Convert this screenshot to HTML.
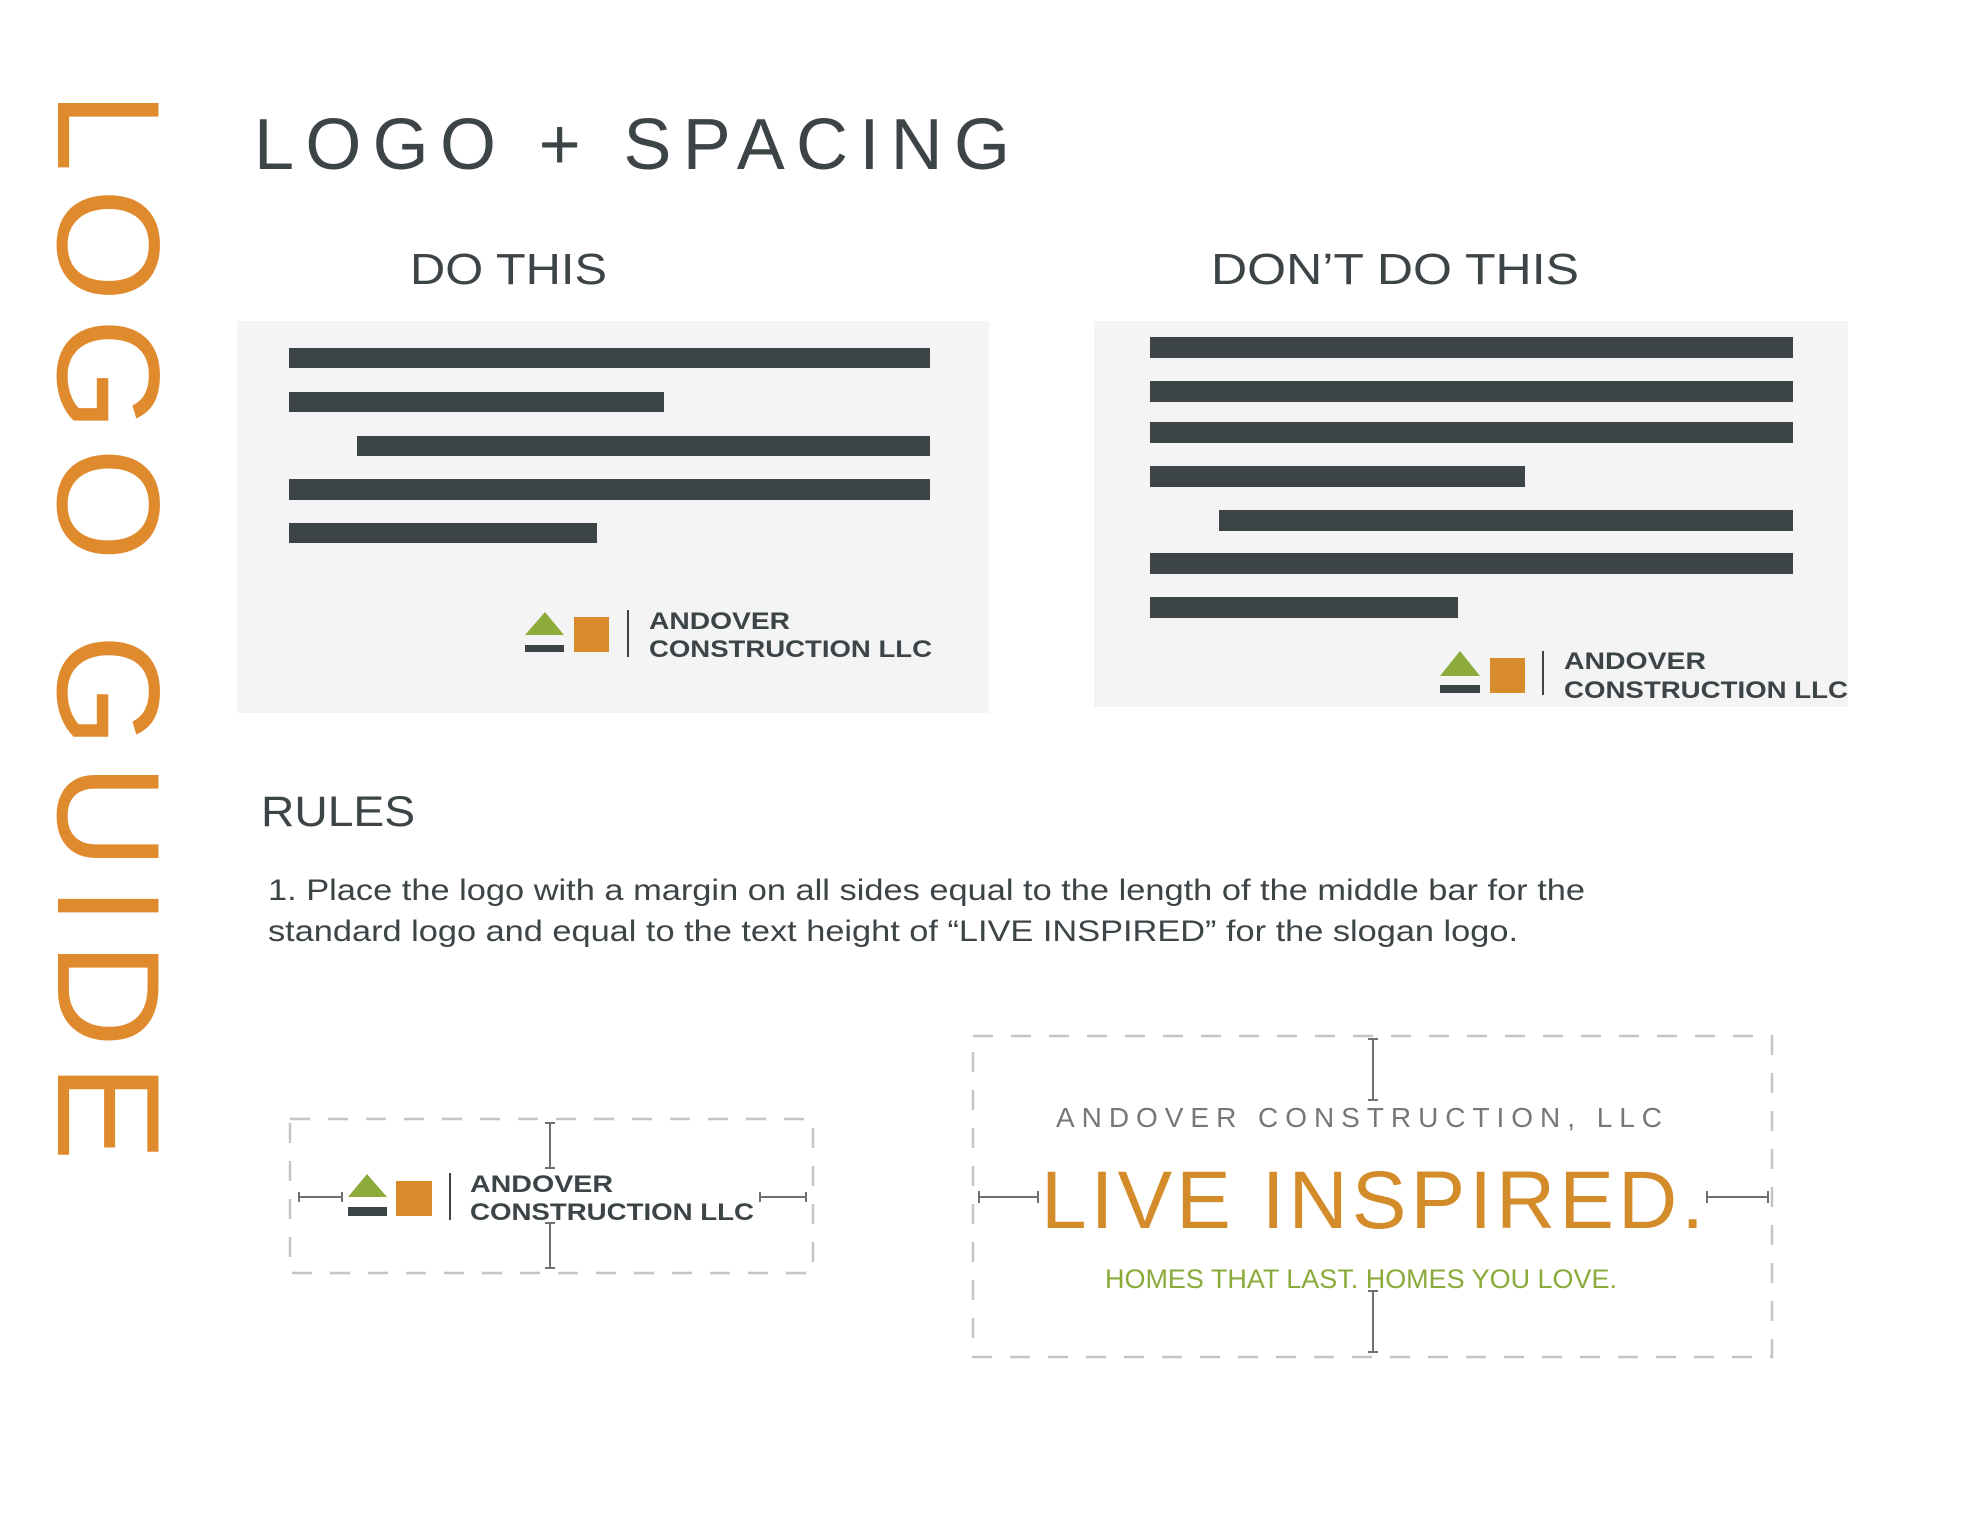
<!DOCTYPE html>
<html><head><meta charset="utf-8"><style>
html,body{margin:0;padding:0;background:#fff;}
svg{display:block}
text{font-family:"Liberation Sans",sans-serif;}
</style></head><body>
<svg width="1980" height="1530" viewBox="0 0 1980 1530" xmlns="http://www.w3.org/2000/svg">
<rect width="1980" height="1530" fill="#fff"/>
<!-- vertical LOGO GUIDE -->
<text transform="translate(58,91) rotate(90)" font-size="146" fill="#e08a2e" textLength="1070" lengthAdjust="spacing">LOGO GUIDE</text>
<!-- title -->
<text x="254" y="169" font-size="72" fill="#3d4447" textLength="756" lengthAdjust="spacing">LOGO + SPACING</text>
<text x="410" y="284" font-size="44" fill="#3d4447" textLength="197" lengthAdjust="spacingAndGlyphs">DO THIS</text>
<text x="1211" y="284" font-size="44" fill="#3d4447" textLength="368" lengthAdjust="spacingAndGlyphs">DON’T DO THIS</text>

<!-- DO box -->
<rect x="237" y="321" width="752" height="392" fill="#f4f4f4"/>
<g fill="#3d4447">
<rect x="289" y="348" width="641" height="20"/>
<rect x="289" y="392" width="375" height="20"/>
<rect x="357" y="436" width="573" height="20"/>
<rect x="289" y="479" width="641" height="21"/>
<rect x="289" y="523" width="308" height="20"/>
</g>
<polygon points="525,635 545,612 564,635" fill="#8cab3b"/>
<rect x="525" y="645" width="39" height="7" fill="#3d4447"/>
<rect x="574" y="617" width="35" height="35" fill="#d98a2b"/>
<rect x="627" y="610" width="2" height="47" fill="#3d4447"/>
<text x="649" y="629" font-size="24" font-weight="bold" fill="#3d4447" textLength="141" lengthAdjust="spacingAndGlyphs">ANDOVER</text>
<text x="649" y="657" font-size="24" font-weight="bold" fill="#3d4447" textLength="283" lengthAdjust="spacingAndGlyphs">CONSTRUCTION LLC</text>

<!-- DON'T box -->
<rect x="1094" y="321" width="754" height="386" fill="#f4f4f4"/>
<g fill="#3d4447">
<rect x="1150" y="337" width="643" height="21"/>
<rect x="1150" y="381" width="643" height="21"/>
<rect x="1150" y="422" width="643" height="21"/>
<rect x="1150" y="466" width="375" height="21"/>
<rect x="1219" y="510" width="574" height="21"/>
<rect x="1150" y="553" width="643" height="21"/>
<rect x="1150" y="597" width="308" height="21"/>
</g>
<polygon points="1440,676 1460,651 1480,676" fill="#8cab3b"/>
<rect x="1440" y="685" width="40" height="8" fill="#3d4447"/>
<rect x="1490" y="658" width="35" height="35" fill="#d98a2b"/>
<rect x="1542" y="651" width="2" height="44" fill="#3d4447"/>
<text x="1564" y="669" font-size="24" font-weight="bold" fill="#3d4447" textLength="142" lengthAdjust="spacingAndGlyphs">ANDOVER</text>
<text x="1564" y="698" font-size="24" font-weight="bold" fill="#3d4447" textLength="284" lengthAdjust="spacingAndGlyphs">CONSTRUCTION LLC</text>

<!-- RULES -->
<text x="261" y="826" font-size="43" fill="#3d4447" textLength="154" lengthAdjust="spacingAndGlyphs">RULES</text>
<text x="268" y="900" font-size="30" fill="#3d4447" textLength="1317" lengthAdjust="spacingAndGlyphs">1. Place the logo with a margin on all sides equal to the length of the middle bar for the</text>
<text x="268" y="941" font-size="30" fill="#3d4447" textLength="1250" lengthAdjust="spacingAndGlyphs">standard logo and equal to the text height of “LIVE INSPIRED” for the slogan logo.</text>

<!-- left dashed box -->
<rect x="290" y="1119" width="523" height="154" fill="none" stroke="#c4c4c4" stroke-width="2.5" stroke-dasharray="20,18"/>
<g stroke="#707070" stroke-width="2" fill="none">
<path d="M550 1123V1168M545 1123H555M545 1168H555"/>
<path d="M550 1223V1268M545 1223H555M545 1268H555"/>
<path d="M299 1197H342M299 1192V1202M342 1192V1202"/>
<path d="M760 1197H806M760 1192V1202M806 1192V1202"/>
</g>
<polygon points="348,1197 367,1174 387,1197" fill="#8cab3b"/>
<rect x="348" y="1207" width="39" height="9" fill="#3d4447"/>
<rect x="396" y="1181" width="36" height="35" fill="#d98a2b"/>
<rect x="449" y="1173" width="2" height="47" fill="#3d4447"/>
<text x="470" y="1192" font-size="24" font-weight="bold" fill="#3d4447" textLength="143" lengthAdjust="spacingAndGlyphs">ANDOVER</text>
<text x="470" y="1220" font-size="24" font-weight="bold" fill="#3d4447" textLength="284" lengthAdjust="spacingAndGlyphs">CONSTRUCTION LLC</text>

<!-- right dashed box -->
<rect x="973" y="1036" width="799" height="321" fill="none" stroke="#c4c4c4" stroke-width="2.5" stroke-dasharray="20,18"/>
<g stroke="#707070" stroke-width="2" fill="none">
<path d="M1373 1039V1100M1368 1039H1378M1368 1100H1378"/>
<path d="M1373 1291V1352M1368 1291H1378M1368 1352H1378"/>
<path d="M979 1197H1038M979 1191V1203M1038 1191V1203"/>
<path d="M1707 1197H1768M1707 1191V1203M1768 1191V1203"/>
</g>
<text x="1056" y="1127" font-size="28" fill="#777" textLength="606" lengthAdjust="spacing">ANDOVER CONSTRUCTION, LLC</text>
<text x="1041" y="1228" font-size="82" fill="#d48b2a" textLength="663" lengthAdjust="spacing">LIVE INSPIRED.</text>
<text x="1105" y="1288" font-size="27" fill="#8aaa3a" textLength="512" lengthAdjust="spacingAndGlyphs">HOMES THAT LAST.  HOMES YOU LOVE.</text>
</svg>
</body></html>
